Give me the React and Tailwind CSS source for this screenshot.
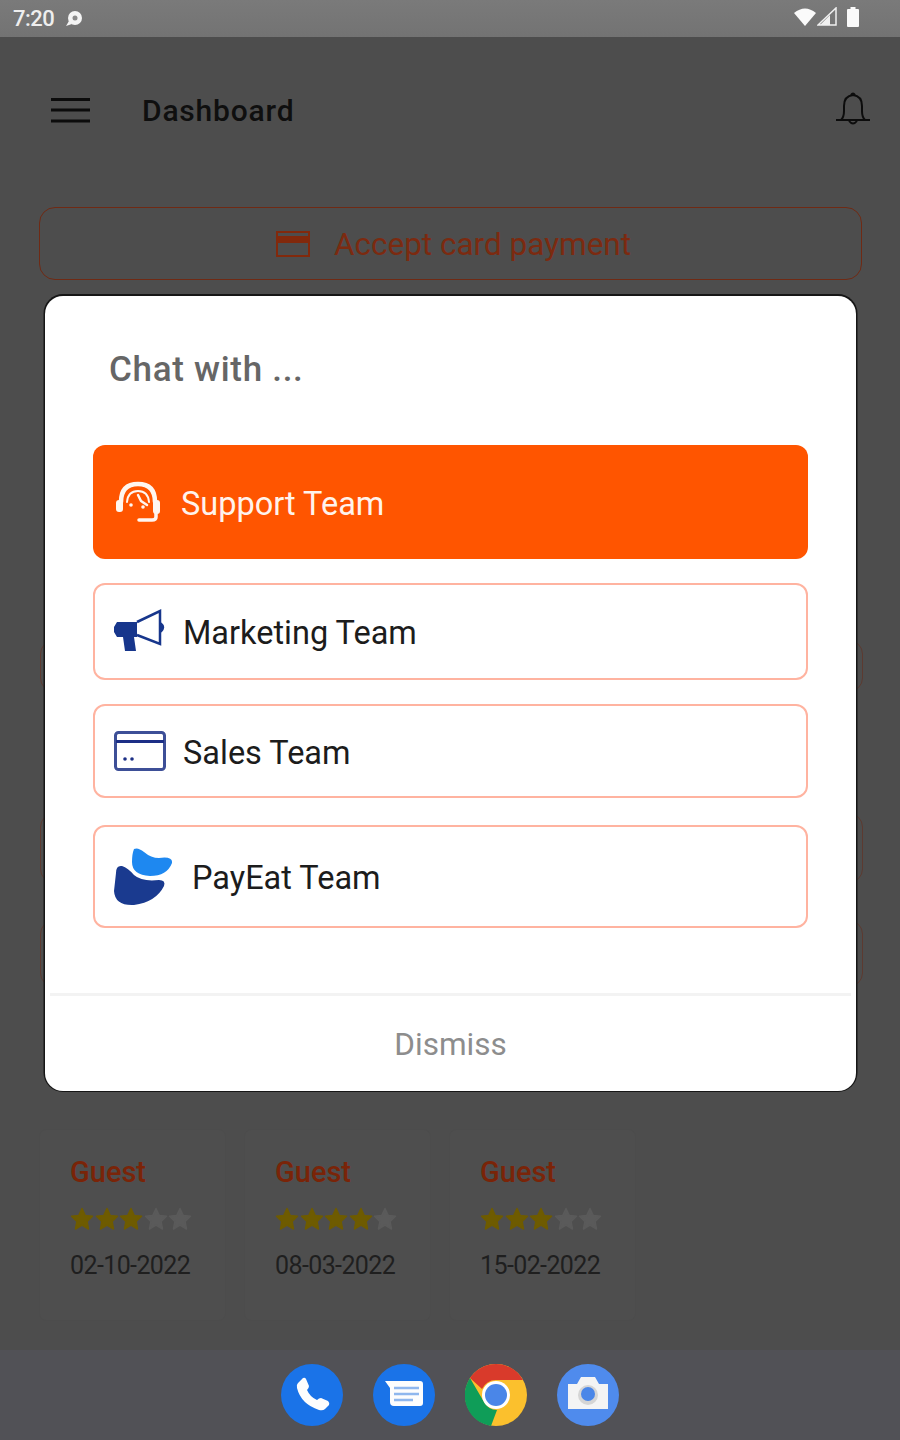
const REVIEWS = [
  { name: 'Guest', stars: 3, date: '02-10-2022' },
  { name: 'Guest', stars: 4, date: '08-03-2022' },
  { name: 'Guest', stars: 3, date: '15-02-2022' },
];

function StatusBar() {
  return (
    <div className="flex h-[37px] shrink-0 items-center justify-between bg-gradient-to-b from-[#7a7a7a] to-[#737373] pl-[13px] pr-[40px]">
      <div className="flex items-center gap-[10px]">
        <span className="text-[22px] font-medium leading-none tracking-[-0.5px] text-[#eeeeee]">7:20</span>
        <svg width="20" height="18" viewBox="0 0 20 18">
          <circle cx="11" cy="8" r="7" fill="#f4f4f4" />
          <path d="M5 11 L2 16 L8 14 Z" fill="#f4f4f4" />
          <circle cx="11" cy="8" r="2.500" fill="#8a8a8a" />
        </svg>
      </div>
      <div className="mb-[4px] flex items-center">
        <svg width="24" height="20" viewBox="0 0 24 20">
          <path d="M1 6 Q12 -3 23 6 L12 19 Z" fill="#fafafa" />
        </svg>
        <svg width="20" height="20" viewBox="0 0 20 20">
          <path d="M1 18 L19 1 V18 Z" fill="none" stroke="#f0f0f0" strokeWidth="1.500" />
          <path d="M3 18 L13 8 V18 Z" fill="#f0f0f0" />
        </svg>
        <svg width="14" height="22" viewBox="0 0 14 22" className="ml-[9px]">
          <path d="M4.500 1 H9.500 V3 H12 Q13 3 13 4 V20 Q13 21 12 21 H2 Q1 21 1 20 V4 Q1 3 2 3 H4.500 Z" fill="#fafafa" />
        </svg>
      </div>
    </div>
  );
}

function Star({ filled }) {
  const color = filled ? '#6e5b00' : '#5a5a5a';
  return (
    <svg width="24" height="24" viewBox="0 0 24 24">
      <path
        d="M12 1.500 L15.200 8.400 L22.500 9.300 L17.100 14.400 L18.500 22 L12 18.200 L5.500 22 L6.900 14.400 L1.500 9.300 L8.800 8.400 Z"
        fill={color}
        stroke={color}
        strokeWidth="1.500"
        strokeLinejoin="round"
      />
    </svg>
  );
}

function ReviewCard({ review }) {
  return (
    <div className="flex h-[190px] w-[185px] flex-col rounded-md bg-[#4e4e4e] pl-[30px] pt-[25px] shadow-[0_0_2px_rgba(0,0,0,0.03)]">
      <span className="text-[29px] font-medium leading-[34px] text-[#7a2408]">{review.name}</span>
      <div className="mt-[18px] flex gap-[0.500px]">
        {[1, 2, 3, 4, 5].map((n) => (
          <Star key={n} filled={n <= review.stars} />
        ))}
      </div>
      <span className="mt-[19px] text-[25px] leading-[32px] tracking-[-0.6px] text-[#1f1f1f]">{review.date}</span>
    </div>
  );
}

function PageBehind() {
  return (
    <div className="flex flex-1 flex-col">
      <header className="flex h-[170px] shrink-0 items-start justify-between pl-[51px] pr-[29px] pt-[55px]">
        <div className="flex items-center">
          <svg width="39" height="26" viewBox="0 0 39 26" className="-mt-[2px]">
            <path d="M0 2.500 H39 M0 13 H39 M0 24 H39" stroke="#0c0c0c" strokeWidth="3" />
          </svg>
          <h1 className="ml-[52px] mt-[1px] text-[30px] font-medium leading-[36px] tracking-[0.8px] text-[#0f0f0f]">Dashboard</h1>
        </div>
        <svg width="36" height="34" viewBox="0 0 36 34" fill="none" stroke="#0c0c0c" strokeWidth="2">
          <path d="M1 28 H35 M6 28 Q9 25 9 19 V14 Q9 4 18 3 Q27 4 27 14 V19 Q27 25 30 28" />
          <path d="M16 3 Q18 0 20 3 M14 29 Q18 34 22 29" />
        </svg>
      </header>
      <div className="ml-[39px] mr-[38px] flex h-[73px] shrink-0 items-center justify-center gap-[24px] rounded-[16px] border border-[#6f2a14] pl-[6px]">
        <svg width="34" height="26" viewBox="0 0 34 26" fill="none" stroke="#82290c" strokeWidth="2">
          <rect x="1" y="1" width="32" height="24" />
          <path d="M1 6 H33 V11 H1 Z" fill="#82290c" />
        </svg>
        <span className="pt-[3px] text-[31.500px] leading-[36px] text-[#7c2a10]">Accept card payment</span>
      </div>
      <div className="ml-[40px] mr-[37px] mt-[360px] h-[52px] shrink-0 rounded-[14px] border border-[#5c3a30]" />
      <div className="ml-[40px] mr-[37px] mt-[121px] h-[70px] shrink-0 rounded-[14px] border border-[#5c3a30]" />
      <div className="ml-[40px] mr-[37px] mt-[37px] h-[67px] shrink-0 rounded-[14px] border border-[#5c3a30]" />
      <div className="mx-[40px] mt-[143px] flex gap-[20px]">
        {REVIEWS.map((review) => (
          <ReviewCard key={review.date} review={review} />
        ))}
      </div>
    </div>
  );
}

function SupportIcon() {
  return (
    <svg width="46" height="42" viewBox="0 0 46 42" fill="none" stroke="#fff6f0" strokeLinecap="round" strokeLinejoin="round">
      <path d="M6 21 Q6 3 23 3 Q40 3 40 21" strokeWidth="4.500" />
      <path d="M12 21 Q13 10 23 10 Q33 10 34 21" strokeWidth="2" />
      <rect x="1" y="19" width="7" height="12" rx="3" fill="#fff6f0" stroke="none" />
      <rect x="38" y="19" width="7" height="14" rx="3" fill="#fff6f0" stroke="none" />
      <path d="M41 32 V36 Q41 39 37 39 H24" strokeWidth="3.500" />
      <path d="M23 14 L26 20 L32 24" strokeWidth="2.500" />
      <circle cx="16" cy="24" r="1.800" fill="#fff6f0" stroke="none" />
      <circle cx="28" cy="26" r="1.800" fill="#fff6f0" stroke="none" />
    </svg>
  );
}

function MegaphoneIcon() {
  return (
    <svg width="52" height="46" viewBox="0 0 52 46">
      <path d="M0 18 L3 13 H23 V28 H20 L22 42 H11 L9 28 H3 L0 23 Z" fill="#17368c" />
      <path d="M23 13 L46 2 V35 L23 26" fill="none" stroke="#17368c" strokeWidth="2.500" />
      <path d="M47 14 Q52 18 47 23" fill="#17368c" stroke="#17368c" strokeWidth="1.500" />
    </svg>
  );
}

function CardIcon() {
  return (
    <svg width="52" height="40" viewBox="0 0 52 40" fill="none">
      <rect x="1.500" y="1.500" width="49" height="37" rx="3" stroke="#3d4f97" strokeWidth="3" />
      <path d="M2 10.500 H50" stroke="#1c2f86" strokeWidth="3" />
      <circle cx="11" cy="28" r="1.800" fill="#1c2f86" />
      <circle cx="18" cy="28" r="1.800" fill="#1c2f86" />
    </svg>
  );
}

function PayEatLogo() {
  return (
    <svg width="60" height="58" viewBox="0 0 60 58">
      <path d="M20 1 Q24 -1 30 4 Q37 10 45 10 Q59 8 58 15 Q53 28 36 28 Q18 27 18 14 Q18 6 20 1 Z" fill="#1e88f0" />
      <path d="M2 25 Q2 17 8 18 Q14 20 20 27 Q28 34 45 32 Q52 32 50 38 Q42 54 20 57 Q1 58 0 43 Z" fill="#1a3a8f" />
    </svg>
  );
}

function TeamRow({ height, gap, icon, label, className = '' }) {
  return (
    <div
      className={`flex items-center rounded-[12px] border-2 border-[#ffb3a0] pl-[19px] ${className}`}
      style={{ height, gap }}
    >
      {icon}
      <span className="pt-[3px] text-[32.500px] leading-[40px] text-[#1c1c1c]">{label}</span>
    </div>
  );
}

function ChatModal() {
  return (
    <div className="absolute left-[45px] top-[296px] flex h-[795px] w-[811px] flex-col rounded-[18px] bg-white shadow-[0_-0.5px_0_1.5px_#161616]">
      <h2 className="ml-[64px] mt-[53px] text-[35px] font-medium leading-[42px] tracking-[0.7px] text-[#666666]">Chat with ...</h2>
      <div className="mx-[48px] mt-[54px] flex h-[114px] items-center gap-[20px] rounded-[12px] bg-[#ff5500] pl-[22px]">
        <SupportIcon />
        <span className="pt-[3px] text-[32.500px] leading-[40px] text-[#fff3ec]">Support Team</span>
      </div>
      <div className="mx-[48px] mt-[24px] flex flex-col">
        <TeamRow height="97px" gap="17px" icon={<MegaphoneIcon />} label="Marketing Team" />
        <TeamRow height="94px" gap="17px" icon={<CardIcon />} label="Sales Team" className="mt-[24px]" />
        <TeamRow height="103px" gap="18px" icon={<PayEatLogo />} label="PayEat Team" className="mt-[27px]" />
      </div>
      <div className="mx-[5px] mt-[65px] h-[3px] bg-[#f3f3f3]" />
      <div className="flex flex-1 items-center justify-center pt-[2px]">
        <span className="text-[31.500px] leading-[38px] text-[#8d8d8d]">Dismiss</span>
      </div>
    </div>
  );
}

function Dock() {
  return (
    <div className="flex h-[90px] shrink-0 items-center justify-center gap-[30px] bg-[#515156] pb-[1px]">
      <svg width="62" height="62" viewBox="0 0 62 62">
        <circle cx="31" cy="31" r="31" fill="#1a73e8" />
        <path d="M17 19 L22 14 Q24 13 25 15 L28 22 Q28 24 26 26 Q29 33 36 36 Q38 34 40 34 L47 37 Q49 39 48 41 L44 45 Q42 47 38 46 Q20 40 16 24 Q15 21 17 19 Z" fill="#fdfdfd" />
      </svg>
      <svg width="62" height="62" viewBox="0 0 62 62">
        <circle cx="31" cy="31" r="31" fill="#1a73e8" />
        <path d="M12 17 H47 Q50 17 50 20 V39 Q50 42 47 42 H21 Q17 42 17 38 V24 Z" fill="#fdfdfd" />
        <path d="M21 24 H46 M21 30 H46 M21 36 H40" stroke="#8fb7ee" strokeWidth="2.500" />
      </svg>
      <svg width="62" height="62" viewBox="0 0 62 62">
        <circle cx="31" cy="31" r="31" fill="#fbc02d" />
        <path d="M31 0 A31 31 0 0 1 58 16 H31 A15 15 0 0 0 17 25 L5 14 A31 31 0 0 1 31 0 Z" fill="#d93a2b" />
        <path d="M5 14 L19 38 A15 15 0 0 0 32 46 L26 62 A31 31 0 0 1 5 14 Z" fill="#0f9d58" />
        <circle cx="31" cy="31" r="14" fill="#fff" />
        <circle cx="31" cy="31" r="11" fill="#4a86e8" />
      </svg>
      <svg width="62" height="62" viewBox="0 0 62 62">
        <circle cx="31" cy="31" r="31" fill="#4f8bed" />
        <path d="M11 20 H20 L24 13 H38 L42 20 H51 V45 H11 Z" fill="#f4f4f4" />
        <circle cx="31" cy="31" r="10" fill="#d5d5d5" />
        <circle cx="31" cy="30" r="7" fill="#4a86e8" />
      </svg>
    </div>
  );
}

function App() {
  return (
    <div className="relative flex h-[1440px] w-[900px] flex-col overflow-hidden bg-[#4d4d4d] font-['Roboto',sans-serif]">
      <StatusBar />
      <PageBehind />
      <Dock />
      <ChatModal />
    </div>
  );
}

export default App;
